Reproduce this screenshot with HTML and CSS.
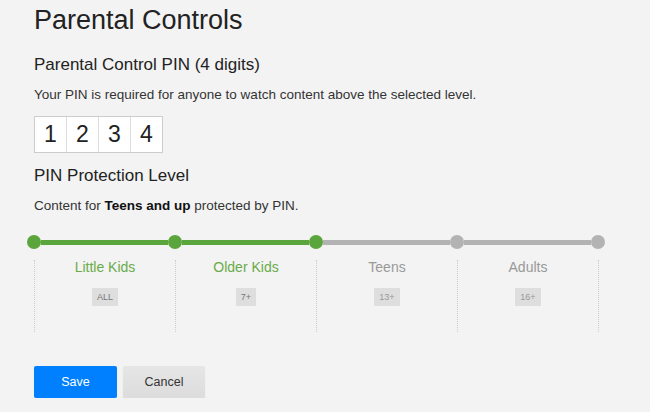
FILE: index.html
```html
<!DOCTYPE html>
<html>
<head>
<meta charset="utf-8">
<link rel="stylesheet" href="styles.css">
</head>
<body>
<div class="page">
  <h1 class="title">Parental Controls</h1>
  <h2 class="subtitle">Parental Control PIN (4 digits)</h2>
  <p class="desc">Your PIN is required for anyone to watch content above the selected level.</p>
  <div class="pin">
    <span class="digit">1</span><span class="digit">2</span><span class="digit">3</span><span class="digit">4</span>
  </div>
  <h2 class="subtitle level">PIN Protection Level</h2>
  <p class="desc">Content for <b>Teens and up</b> protected by PIN.</p>
  <div class="slider">
    <div class="track">
      <span class="dot on"></span><span class="seg on"></span>
      <span class="dot on"></span><span class="seg on"></span>
      <span class="dot on"></span><span class="seg"></span>
      <span class="dot"></span><span class="seg"></span>
      <span class="dot"></span>
    </div>
    <div class="cols">
      <div class="col on"><div class="label">Little Kids</div><span class="badge">ALL</span></div>
      <div class="col on"><div class="label">Older Kids</div><span class="badge">7+</span></div>
      <div class="col"><div class="label">Teens</div><span class="badge">13+</span></div>
      <div class="col last"><div class="label">Adults</div><span class="badge">16+</span></div>
    </div>
  </div>
  <div class="actions">
    <button class="btn save">Save</button>
    <button class="btn cancel">Cancel</button>
  </div>
</div>
</body>
</html>
```
FILE: styles.css
```css
html, body {
  margin: 0;
  padding: 0;
  background: #f3f3f3;
  font-family: "Liberation Sans", Arial, sans-serif;
  color: #333;
}
.page {
  padding: 5px 0 0 34px;
}
.title {
  margin: 0;
  font-size: 27px;
  font-weight: normal;
  line-height: 30px;
  color: #222;
}
.subtitle {
  margin: 20px 0 0;
  font-size: 17px;
  font-weight: normal;
  line-height: 20px;
  color: #222;
}
.subtitle.level {
  margin-top: 13px;
}
.desc {
  margin: 11px 0 0;
  font-size: 13.5px;
  line-height: 17px;
  color: #333;
}
.desc b {
  color: #111;
}
.pin {
  display: flex;
  margin-top: 13px;
  width: max-content;
  border: 1px solid #ccc;
  background: #fff;
}
.digit {
  width: 31px;
  height: 35px;
  font-size: 23px;
  line-height: 35px;
  text-align: center;
  color: #222;
  border-left: 1px solid #ddd;
}
.digit:first-child {
  border-left: none;
  width: 31px;
}
.slider {
  margin-top: 21px;
}
.track {
  display: flex;
  align-items: center;
  margin-left: -7px;
  height: 14px;
}
.dot {
  width: 14px;
  height: 14px;
  border-radius: 50%;
  background: #b3b3b3;
  flex: none;
}
.seg {
  width: 127px;
  height: 5px;
  background: #b3b3b3;
  flex: none;
}
.dot.on, .seg.on {
  background: #5ba63c;
}
.cols {
  display: flex;
  margin-top: 11px;
}
.col {
  width: 140px;
  height: 72px;
  border-left: 1px dotted #ccc;
  text-align: center;
}
.col.last {
  border-right: 1px dotted #ccc;
}
.label {
  font-size: 14px;
  line-height: 16px;
  color: #999;
  margin-top: -1px;
}
.col.on .label {
  color: #6aab4a;
}
.badge {
  display: inline-block;
  margin-top: 13px;
  padding: 0 5px;
  height: 18px;
  line-height: 18px;
  font-size: 9px;
  background: #dedede;
  color: #999;
}
.col.on .badge {
  color: #777;
}
.actions {
  display: flex;
  gap: 6px;
  margin-top: 34px;
}
.btn {
  width: 83px;
  height: 32px;
  border: none;
  border-radius: 2px;
  font-family: "Liberation Sans", Arial, sans-serif;
  font-size: 12.5px;
  cursor: pointer;
}
.save {
  background: #0080ff;
  color: #fff;
  box-shadow: 0 1px 1px rgba(0,0,0,0.15);
}
.cancel {
  width: 82px;
  background: linear-gradient(#e6e6e6, #dcdcdc);
  color: #333;
  box-shadow: 0 1px 1px rgba(0,0,0,0.15);
}
```
